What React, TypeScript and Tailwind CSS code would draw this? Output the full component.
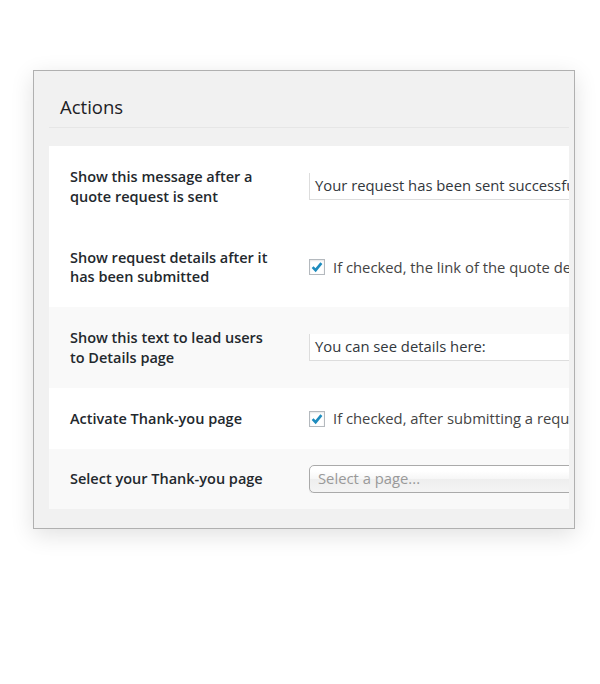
import React from "react";

const font = { fontFamily: '"Open Sans", "Noto Sans", Arial, sans-serif' };

function Check() {
  return (
    <span className="relative flex h-4 w-4 shrink-0 items-center justify-center border border-[#b4b9be] bg-white shadow-[inset_0_1px_2px_rgba(0,0,0,0.1)]">
      <svg width="14" height="14" viewBox="0 0 14 14" className="absolute left-[0px] top-[0px]">
        <path d="M2.6 7.2 L5.6 10.2 L11.4 3.2" fill="none" stroke="#1e8cbe" strokeWidth="2.6" strokeLinecap="butt" strokeLinejoin="miter" />
      </svg>
    </span>
  );
}

function Row({ label, bg, h, children }: { label: React.ReactNode; bg: string; h: string; children: React.ReactNode }) {
  return (
    <div className={`flex items-center ${bg} ${h}`}>
      <div className="w-[205px] shrink-0 pl-[21px] box-content text-[14.5px] leading-[19.5px] font-semibold text-[#23282d]">{label}</div>
      <div className="ml-[34px] flex min-w-0 flex-1 items-center overflow-hidden">{children}</div>
    </div>
  );
}

export default function App() {
  return (
    <div className="min-h-[684px] w-[600px] bg-white pt-[70px] pl-[33px]" style={font}>
      <div className="h-[459px] w-[542px] border border-[#b0b0b0] bg-[#f1f1f1] pl-[15px] pr-[5px] shadow-[0_6px_22px_rgba(0,0,0,0.12)]">
        <div className="h-[57px] border-b border-[#e6e6e6] pl-[11px] pt-[22px]">
          <h2 className="text-[18.5px] leading-[28px] font-normal text-[#1d2125]">Actions</h2>
        </div>
        <div className="mt-[18px] overflow-hidden">
          <Row label="Show this message after a quote request is sent" bg="bg-white" h="h-[81px]">
            <div className="mt-[-1px] h-[28px] w-[400px] shrink-0 border border-[#dddddd] bg-white pl-[5px] text-[14.8px] leading-[25px] whitespace-nowrap text-[#32373c]">
              Your request has been sent successfully.
            </div>
          </Row>
          <Row label="Show request details after it has been submitted" bg="bg-white" h="h-[80px]">
            <div className="flex items-center whitespace-nowrap">
              <Check />
              <span className="ml-[8px] text-[14.8px] text-[#444444]">If checked, the link of the quote details will be shown</span>
            </div>
          </Row>
          <Row label="Show this text to lead users to Details page" bg="bg-[#f9f9f9]" h="h-[81px]">
            <div className="mt-[-1px] h-[28px] w-[400px] shrink-0 border border-[#dddddd] bg-white pl-[5px] text-[14.8px] leading-[25px] whitespace-nowrap text-[#32373c]">
              You can see details here:
            </div>
          </Row>
          <Row label="Activate Thank-you page" bg="bg-white" h="h-[61px]">
            <div className="flex items-center whitespace-nowrap">
              <Check />
              <span className="ml-[8px] text-[14.8px] text-[#444444]">If checked, after submitting a request the user will be redirected</span>
            </div>
          </Row>
          <Row label="Select your Thank-you page" bg="bg-[#f9f9f9]" h="h-[60px]">
            <div className="h-[28px] w-[400px] shrink-0 rounded-[5px] border border-[#aaaaaa] bg-[linear-gradient(#ffffff_20%,#f6f6f6_50%,#eeeeee_52%,#f4f4f4_100%)] pl-[8px] text-[14.8px] leading-[25px] whitespace-nowrap text-[#999999] shadow-[0_1px_1px_rgba(0,0,0,0.1)]">
              Select a page...
            </div>
          </Row>
        </div>
      </div>
    </div>
  );
}
